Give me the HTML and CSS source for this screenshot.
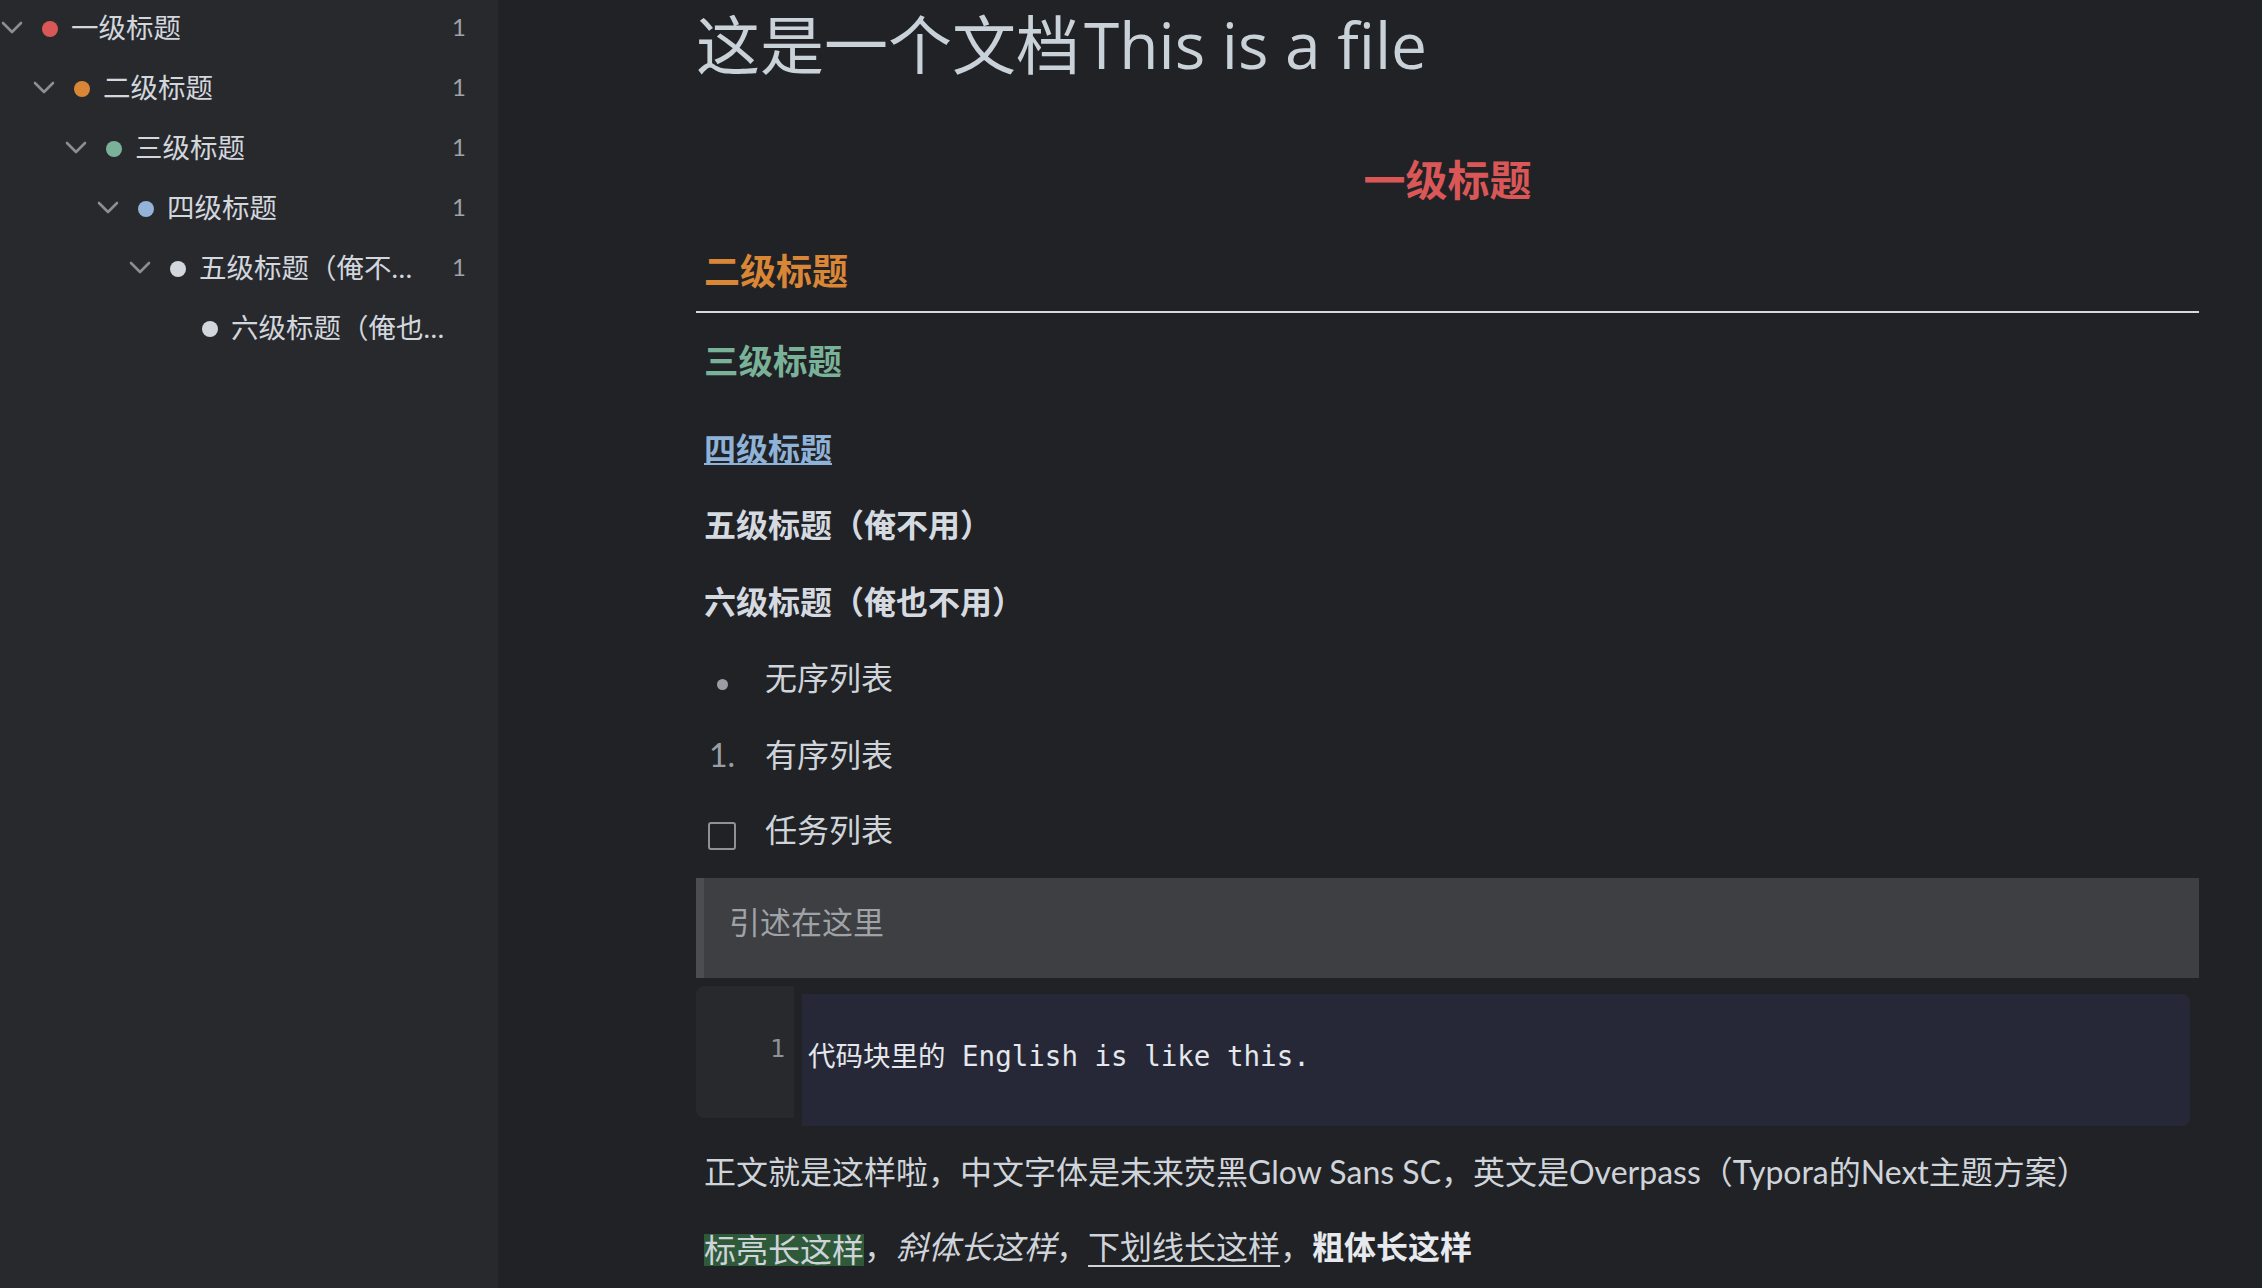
FILE: index.html
```html
<!DOCTYPE html>
<html lang="zh-CN">
<head>
<meta charset="utf-8">
<title>Document</title>
<link rel="stylesheet" href="styles.css">
</head>
<body>
<div class="app">
  <aside class="sidebar">
    <ul class="toc">
      <li class="toc-row lvl0">
        <svg class="chev" viewBox="0 0 24 24"><polyline points="3,9 12,18 21,9"/></svg>
        <span class="dot c1"></span><span class="toc-text">一级标题</span><span class="count">1</span>
      </li>
      <li class="toc-row lvl1">
        <svg class="chev" viewBox="0 0 24 24"><polyline points="3,9 12,18 21,9"/></svg>
        <span class="dot c2"></span><span class="toc-text">二级标题</span><span class="count">1</span>
      </li>
      <li class="toc-row lvl2">
        <svg class="chev" viewBox="0 0 24 24"><polyline points="3,9 12,18 21,9"/></svg>
        <span class="dot c3"></span><span class="toc-text">三级标题</span><span class="count">1</span>
      </li>
      <li class="toc-row lvl3">
        <svg class="chev" viewBox="0 0 24 24"><polyline points="3,9 12,18 21,9"/></svg>
        <span class="dot c4"></span><span class="toc-text">四级标题</span><span class="count">1</span>
      </li>
      <li class="toc-row lvl4">
        <svg class="chev" viewBox="0 0 24 24"><polyline points="3,9 12,18 21,9"/></svg>
        <span class="dot c5"></span><span class="toc-text">五级标题（俺不用）</span><span class="count">1</span>
      </li>
      <li class="toc-row lvl5">
        <svg class="chev hidden" viewBox="0 0 24 24"><polyline points="3,9 12,18 21,9"/></svg>
        <span class="dot c5"></span><span class="toc-text">六级标题（俺也不用）</span>
      </li>
    </ul>
  </aside>
  <main class="doc">
    <div class="title">这是一个文档<span class="title-en">This is a file</span></div>
    <h1>一级标题</h1>
    <h2>二级标题</h2>
    <h3>三级标题</h3>
    <h4><span class="h4-text">四级标题</span></h4>
    <h5>五级标题（俺不用）</h5>
    <h6>六级标题（俺也不用）</h6>
    <ul class="list list-ul">
      <li><span class="marker"><span class="bullet"></span></span><span>无序列表</span></li>
    </ul>
    <ol class="list list-ol">
      <li><span class="marker num">1.</span><span>有序列表</span></li>
    </ol>
    <ul class="list list-task">
      <li><span class="marker"><span class="checkbox"></span></span><span>任务列表</span></li>
    </ul>
    <blockquote class="quote"><p>引述在这里</p></blockquote>
    <div class="code">
      <div class="gutter">1</div>
      <pre class="code-body">代码块里的 English is like this.</pre>
    </div>
    <p class="para">正文就是这样啦，中文字体是未来荧黑Glow Sans SC，英文是Overpass（Typora的Next主题方案）</p>
    <p class="para para-2"><mark class="hl">标亮长这样</mark>，<em>斜体长这样</em>，<u class="ul">下划线长这样</u>，<strong>粗体长这样</strong></p>
  </main>
</div>
</body>
</html>
```
FILE: styles.css
```css
html, body {
  margin: 0;
  padding: 0;
  background: #212225;
}

.app {
  display: flex;
  height: 1288px;
  overflow: hidden;
  font-family: Lato, "Noto Sans CJK SC", sans-serif;
  color: #cfd4da;
}

/* ---------- sidebar ---------- */
.sidebar {
  width: 498px;
  flex: none;
  background: #28292d;
  height: 1288px;
  overflow: hidden;
}

.toc {
  list-style: none;
  margin: -4px 0 0;
  padding: 0 32px 0 0;
}

.toc-row {
  display: flex;
  align-items: center;
  height: 60px;
  font-family: Lato, "Noto Sans CJK SC", sans-serif;
  font-size: 27.5px;
  color: #d2d7dd;
}

.lvl1 { padding-left: 32px; }
.lvl2 { padding-left: 64px; }
.lvl3 { padding-left: 96px; }
.lvl4 { padding-left: 128px; }
.lvl5 { padding-left: 160px; }

.chev {
  width: 24px;
  height: 24px;
  flex: none;
  fill: none;
  stroke: #8b8e93;
  stroke-width: 2.6;
  stroke-linecap: round;
  stroke-linejoin: round;
}

.chev.hidden { visibility: hidden; }

.dot {
  width: 16px;
  height: 16px;
  border-radius: 50%;
  flex: none;
  margin-left: 18px;
  margin-top: 6px;
}

.c1 { background: #d95757; }
.c2 { background: #d98736; }
.c3 { background: #7ab299; }
.c4 { background: #93b4d8; }
.c5 { background: #d2d7dd; }

.toc-text {
  margin-left: 13px;
  flex: 1;
  min-width: 0;
  overflow: hidden;
  white-space: nowrap;
  text-overflow: ellipsis;
}

.count {
  width: 32px;
  flex: none;
  text-align: right;
  font-size: 24px;
  color: #a0a4aa;
}

/* ---------- document ---------- */
.doc {
  flex: 1;
  min-width: 0;
  padding: 0 63px 0 198px;
}

.title {
  font-family: "Open Sans", "Noto Sans CJK SC", sans-serif;
  font-size: 64px;
  line-height: 90px;
  color: #c9d1d9;
}

.title-en {
  margin-left: 4px;
}

h1, h2, h3, h4, h5, h6 {
  margin: 0;
  padding: 0 8px;
  font-weight: 700;
}

h1 {
  margin-top: 60px;
  font-size: 42px;
  line-height: 60px;
  text-align: center;
  color: #d95757;
}

h2 {
  margin-top: 36px;
  font-size: 36px;
  line-height: 50px;
  padding-bottom: 15px;
  border-bottom: 2px solid #d9d9d9;
  color: #d98736;
}

h3 {
  margin-top: 23px;
  font-size: 34.5px;
  line-height: 50px;
  color: #7ab299;
}

h4 {
  margin-top: 40px;
  font-size: 32px;
  line-height: 46px;
  color: #8fb2d8;
}

.h4-text {
  text-decoration: underline;
  text-decoration-thickness: 2px;
  text-underline-offset: 2px;
}

h5 {
  margin-top: 31px;
  font-size: 32px;
  line-height: 44px;
  color: #d5dae0;
}

h6 {
  margin-top: 33px;
  font-size: 32px;
  line-height: 44px;
  color: #d5dae0;
}

.list {
  list-style: none;
  margin: 31px 0 0;
  padding: 0;
}

.list-task { margin-top: 29px; }

.list li {
  display: flex;
  align-items: center;
  height: 46px;
  line-height: 46px;
  padding-left: 8px;
  font-size: 32px;
}

.marker {
  width: 36px;
  flex: none;
  display: flex;
  justify-content: center;
  margin-right: 25px;
}

.bullet {
  width: 11px;
  height: 11px;
  border-radius: 50%;
  background: #9a9ea4;
  margin-top: 12px;
}

.num {
  color: #9a9ea4;
}

.checkbox {
  width: 28px;
  height: 28px;
  box-sizing: border-box;
  border: 2.5px solid #8e9297;
  border-radius: 3px;
  margin-top: 12px;
}

.quote {
  margin: 25px 0 0;
  background: #3e3f42;
  border-left: 8px solid #4c4d51;
  padding: 21px 0 33px 25px;
  color: #9fa3a8;
  font-size: 31px;
  line-height: 46px;
}

.quote p { margin: 0; }

.code {
  display: flex;
  margin-top: 8px;
}

.gutter {
  width: 98px;
  height: 132px;
  flex: none;
  box-sizing: border-box;
  background: #28292c;
  border-radius: 8px 0 0 8px;
  text-align: right;
  padding: 43px 9px 0 0;
  font-family: "DejaVu Sans Mono", monospace;
  font-size: 25px;
  line-height: 40px;
  color: #8e9197;
}

.code-body {
  flex: 1;
  margin: 8px 9px 0 8px;
  height: 132px;
  box-sizing: border-box;
  background: #262837;
  border-radius: 0 8px 8px 0;
  padding: 42px 0 0 6px;
  font-family: "DejaVu Sans Mono", "Noto Sans CJK SC", monospace;
  font-size: 27.5px;
  line-height: 40px;
  color: #e4e7eb;
}

.para {
  margin: 23px 0 0;
  padding-left: 8px;
  font-size: 32px;
  line-height: 46px;
  white-space: nowrap;
}

.para-2 { margin-top: 29px; }

.hl {
  display: inline-block;
  background: #2e5a3a;
  color: inherit;
  line-height: 32px;
  vertical-align: -3px;
}

.para em { font-style: italic; }

.ul {
  text-decoration: underline;
  text-decoration-thickness: 2px;
  text-underline-offset: 6px;
}

.para strong {
  font-weight: 700;
  color: #e6e9ed;
}
```
